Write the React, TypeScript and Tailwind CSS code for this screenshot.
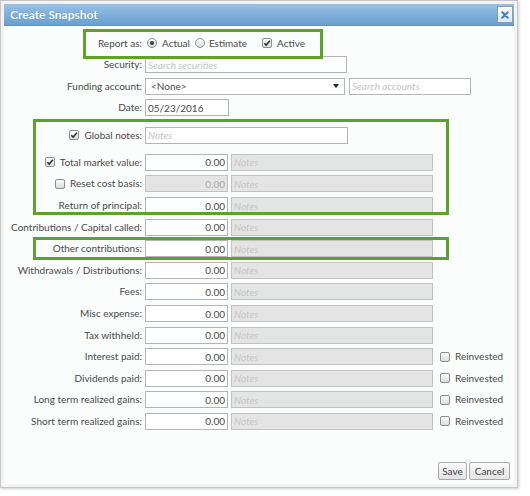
import React from "react";

// Rows that hold an amount and a notes box
const amountRows = [
  { label: "Contributions / Capital called:" },
  { label: "Other contributions:" },
  { label: "Withdrawals / Distributions:" },
  { label: "Fees:" },
  { label: "Misc expense:" },
  { label: "Tax withheld:" },
  { label: "Interest paid:", reinvest: true },
  { label: "Dividends paid:", reinvest: true },
  { label: "Long term realized gains:", reinvest: true },
  { label: "Short term realized gains:", reinvest: true },
];

function Checkbox({ checked }: { checked?: boolean }) {
  return (
    <span className="w-[10px] h-[10px] shrink-0 rounded-[2px] border border-[#8e8e8e] bg-linear-to-b from-[#fdfdfd] to-[#dcdcdc] flex items-center justify-center">
      {checked && (
        <svg viewBox="0 0 10 10" className="w-[8px] h-[8px]">
          <path d="M1.6 5.2 L4 7.6 L8.6 2.2" stroke="#2a2a2a" strokeWidth="1.8" fill="none" />
        </svg>
      )}
    </span>
  );
}

function Radio({ checked }: { checked?: boolean }) {
  return (
    <span className="w-[10px] h-[10px] shrink-0 rounded-full border border-[#8e8e8e] bg-linear-to-b from-white to-[#d8d8d8] flex items-center justify-center">
      {checked && <span className="w-[4px] h-[4px] rounded-full bg-[#3a3a3a]" />}
    </span>
  );
}

function Label({ children, check }: { children: React.ReactNode; check?: "on" | "off" }) {
  return (
    <div className="w-[138px] shrink-0 flex justify-end items-center gap-[5px] whitespace-nowrap">
      {check && <Checkbox checked={check === "on"} />}
      <span>{children}</span>
    </div>
  );
}

function Amount({ disabled }: { disabled?: boolean }) {
  return (
    <input
      readOnly
      defaultValue="0.00"
      className={
        "ml-[3px] w-[83px] h-[17px] px-[2px] text-right border outline-none " +
        (disabled ? "bg-[#e4e4e4] border-[#c2c2c2] text-[#a9a9a9]" : "bg-white border-[#b4b4b4] text-[#4a4a4a]")
      }
    />
  );
}

function Notes() {
  return (
    <input
      readOnly
      placeholder="Notes"
      className="ml-[3px] w-[202px] h-[17px] px-[2px] bg-[#e4e4e4] border border-[#c2c2c2] outline-none placeholder:italic placeholder:text-[#c4c4c4]"
    />
  );
}

export default function App() {
  return (
    <div className="w-[530px] h-[496px] bg-white font-['Lato','Liberation_Sans',sans-serif] text-[10px] text-[#4a4a4a]">
      <div className="w-[518px] h-[488px] border border-[#c6c6c6] bg-[#f3f3f3] p-[3px] flex flex-col shadow-[1px_1px_3px_rgba(0,0,0,0.2)]">
        {/* Title bar */}
        <div className="h-[22px] shrink-0 flex items-center justify-between pl-[6px] pr-[1px] bg-linear-to-b from-[#98c1e4] to-[#6a9fd0] border-b border-[#5b92c7]">
          <span className="text-white font-bold text-[12px] [text-shadow:0_0_1px_rgba(40,80,130,0.6)]">
            Create Snapshot
          </span>
          <button className="w-[16px] h-[17px] border border-[#8d9aa8] bg-linear-to-b from-white to-[#dde5ee] flex items-center justify-center">
            <svg viewBox="0 0 10 10" className="w-[8px] h-[8px]">
              <path d="M1.5 1.5 L8.5 8.5 M8.5 1.5 L1.5 8.5" stroke="#3f7fbf" strokeWidth="2.4" strokeLinecap="round" />
            </svg>
          </button>
        </div>

        {/* Form */}
        <div className="relative flex-1 bg-[#fbfcfc] flex flex-col">
          <div className="flex flex-col gap-[4.6px] pt-[8.5px]">
            <div className="flex items-center h-[17px]">
              <Label>Report as:</Label>
              <div className="ml-[5px] flex items-center">
                <Radio checked />
                <span className="ml-[5px]">Actual</span>
                <span className="ml-[5px]">
                  <Radio />
                </span>
                <span className="ml-[4px]">Estimate</span>
                <span className="ml-[15px]">
                  <Checkbox checked />
                </span>
                <span className="ml-[5px]">Active</span>
              </div>
            </div>

            <div className="flex items-center h-[17px]">
              <Label>Security:</Label>
              <input
                readOnly
                placeholder="Search securities"
                className="ml-[3px] w-[202px] h-[17px] px-[2px] bg-white border border-[#b4b4b4] outline-none placeholder:italic placeholder:text-[#c4c4c4]"
              />
            </div>

            <div className="flex items-center h-[17px]">
              <Label>Funding account:</Label>
              <div className="ml-[3px] w-[200px] h-[17px] pl-[5px] pr-[5px] bg-white border border-[#b4b4b4] flex items-center justify-between">
                <span>&lt;None&gt;</span>
                <svg viewBox="0 0 6 4" className="w-[6px] h-[4px]">
                  <path d="M0 0 H6 L3 4 Z" fill="#222" />
                </svg>
              </div>
              <input
                readOnly
                placeholder="Search accounts"
                className="ml-[4px] w-[122px] h-[17px] px-[2px] bg-white border border-[#b4b4b4] outline-none placeholder:italic placeholder:text-[#c4c4c4]"
              />
            </div>

            <div className="flex items-center h-[17px]">
              <Label>Date:</Label>
              <input
                readOnly
                defaultValue="05/23/2016"
                className="ml-[3px] w-[84px] h-[17px] px-[2px] bg-white border border-[#b4b4b4] outline-none"
              />
            </div>

            <div className="flex items-center h-[17px] mt-[6px]">
              <Label check="on">Global notes:</Label>
              <input
                readOnly
                placeholder="Notes"
                className="ml-[3px] w-[203px] h-[17px] px-[2px] bg-white border border-[#b4b4b4] outline-none placeholder:italic placeholder:text-[#c4c4c4]"
              />
            </div>

            <div className="flex items-center h-[17px] mt-[5.4px]">
              <Label check="on">Total market value:</Label>
              <Amount />
              <Notes />
            </div>

            <div className="flex items-center h-[17px]">
              <Label check="off">Reset cost basis:</Label>
              <Amount disabled />
              <Notes />
            </div>

            <div className="flex items-center h-[17px]">
              <Label>Return of principal:</Label>
              <Amount />
              <Notes />
            </div>

            {amountRows.map((row) => (
              <div key={row.label} className="flex items-center h-[17px]">
                <Label>{row.label}</Label>
                <Amount />
                <Notes />
                {row.reinvest && (
                  <div className="ml-[7px] flex items-center gap-[5px]">
                    <Checkbox />
                    <span>Reinvested</span>
                  </div>
                )}
              </div>
            ))}
          </div>

          {/* Footer buttons */}
          <div className="mt-auto flex justify-end gap-[2px] pr-[4px] pb-[4px]">
            <button className="w-[29px] h-[18px] rounded-[2px] border border-[#a9a9a9] bg-linear-to-b from-[#fafafa] to-[#e4e4e4] text-[#444]">
              Save
            </button>
            <button className="w-[41px] h-[18px] rounded-[2px] border border-[#a9a9a9] bg-linear-to-b from-[#fafafa] to-[#e4e4e4] text-[#444]">
              Cancel
            </button>
          </div>

          {/* Highlight annotations */}
          <div className="absolute left-[79px] top-[3px] w-[240px] h-[30px] border-[3px] border-[#5ea22c] pointer-events-none" />
          <div className="absolute left-[29px] top-[93px] w-[416px] h-[96px] border-[3px] border-[#5ea22c] pointer-events-none" />
          <div className="absolute left-[29px] top-[211px] w-[416px] h-[23px] border-[3px] border-[#5ea22c] pointer-events-none" />
        </div>
      </div>
    </div>
  );
}
